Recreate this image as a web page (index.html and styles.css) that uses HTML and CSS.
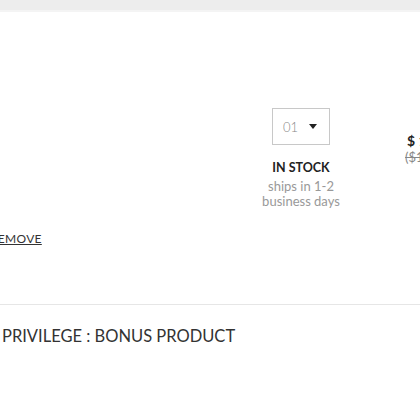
FILE: index.html
```html
<!DOCTYPE html>
<html>
<head>
<meta charset="utf-8">
<link rel="stylesheet" href="styles.css">
</head>
<body>
<div class="topbar"></div>
<section class="cart-item">
  <div class="item-row">
    <div class="info-col">
      <a class="remove" href="#">REMOVE</a>
    </div>
    <div class="qty-col">
      <div class="qty-select"><span class="qty-val">01</span><span class="caret"></span></div>
      <div class="stock">IN STOCK</div>
      <div class="ships">ships in 1-2<br>business days</div>
    </div>
    <div class="price-col">
      <div class="price">$ 120.00</div>
      <div class="old-price">($150.00)</div>
    </div>
  </div>
</section>
<section class="bonus">
  <h2 class="bonus-title">PRIVILEGE : BONUS PRODUCT</h2>
</section>
</body>
</html>
```
FILE: styles.css
```css
html, body { margin: 0; padding: 0; background: #fff; overflow: hidden; }
body { font-family: Lato, "Open Sans", sans-serif; color: #333; width: 420px; height: 420px; }
.topbar { height: 10px; background: #ededed; border-bottom: 2px solid #f4f4f4; }
.cart-item { height: 292px; border-bottom: 1px solid #e6e6e6; }
.item-row { display: flex; margin-left: -10px; padding-top: 96px; }
.info-col { flex: 0 0 271px; display: flex; flex-direction: column; }
.remove { margin-top: 123px; font-size: 12px; color: #333; text-decoration: underline; letter-spacing: 0.3px; }
.qty-col { flex: 0 0 80px; display: flex; flex-direction: column; align-items: center; }
.qty-select { width: 58px; height: 37px; border: 1px solid #c8c8c8; display: flex; align-items: center; justify-content: space-between; padding: 0 12px 0 10px; box-sizing: border-box; }
.qty-val { font-size: 13px; color: #888; font-weight: 300; }
.caret { width: 0; height: 0; border-left: 4px solid transparent; border-right: 4px solid transparent; border-top: 5px solid #222; }
.stock { margin-top: 15px; font-size: 12.5px; font-weight: 700; color: #222; }
.ships { margin-top: 4px; font-size: 13px; color: #999; text-align: center; line-height: 15px; }
.price-col { flex: 0 0 auto; padding-left: 66px; padding-top: 24px; }
.price { font-size: 14px; font-weight: 700; color: #222; white-space: nowrap; }
.old-price { font-size: 13px; color: #888; text-decoration: line-through; white-space: nowrap; margin-left: -2px; }
.bonus { padding: 21px 0 0 2px; }
.bonus-title { margin: 0; font-size: 16.5px; font-weight: 400; color: #333; }
```
